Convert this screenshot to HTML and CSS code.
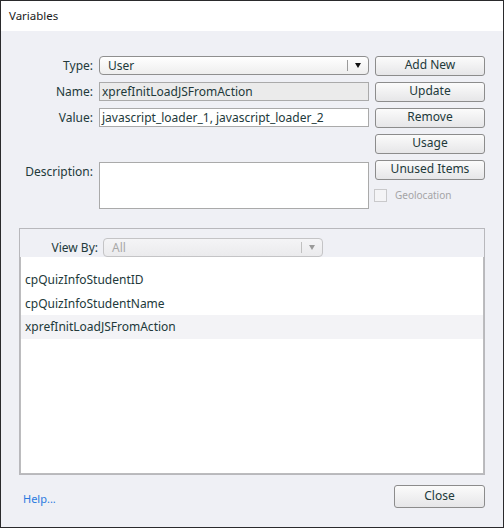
FILE: index.html
```html
<!DOCTYPE html>
<html>
<head>
<meta charset="utf-8">
<link rel="stylesheet" href="styles.css">
</head>
<body>
<div class="window">
  <div class="titlebar">Variables</div>
  <div class="content">
    <div class="top">
      <div class="form">
        <label class="lbl">Type:</label>
        <div class="select">
          <span class="sel-text">User</span>
          <span class="sel-sep"></span>
          <span class="sel-arrow"></span>
        </div>
        <label class="lbl">Name:</label>
        <div class="field readonly">xprefInitLoadJSFromAction</div>
        <label class="lbl">Value:</label>
        <div class="field">javascript_loader_1, javascript_loader_2</div>
        <label class="lbl lbl-desc">Description:</label>
        <div class="field desc"></div>
      </div>
      <div class="buttons">
        <button class="btn">Add New</button>
        <button class="btn">Update</button>
        <button class="btn">Remove</button>
        <button class="btn">Usage</button>
        <button class="btn">Unused Items</button>
        <div class="check">
          <span class="box"></span>
          <span class="check-label">Geolocation</span>
        </div>
      </div>
    </div>
    <div class="panel">
      <div class="panel-head">
        <label class="lbl viewby">View By:</label>
        <div class="select disabled">
          <span class="sel-text">All</span>
          <span class="sel-sep"></span>
          <span class="sel-arrow"></span>
        </div>
      </div>
      <div class="list">
        <div class="row">cpQuizInfoStudentID</div>
        <div class="row">cpQuizInfoStudentName</div>
        <div class="row selected">xprefInitLoadJSFromAction</div>
      </div>
    </div>
    <div class="footer">
      <a class="help">Help...</a>
      <button class="btn close">Close</button>
    </div>
  </div>
</div>
</body>
</html>
```
FILE: styles.css
```css
* { box-sizing: border-box; }
html, body { margin: 0; padding: 0; }
body {
  width: 504px;
  height: 528px;
  font-family: "Noto Sans", "Open Sans", sans-serif;
  font-size: 12px;
  color: #22393a;
}
.window {
  width: 504px;
  height: 528px;
  border: 1px solid #2a2a2c;
  background: #eff0f5;
  display: flex;
  flex-direction: column;
}
.titlebar {
  height: 30px;
  background: #ffffff;
  color: #1a1a1a;
  padding-left: 8px;
  line-height: 30px;
  font-size: 11.5px;
}
.content {
  flex: 1;
  display: flex;
  flex-direction: column;
  padding: 25px 18px 0 0;
}
.top {
  display: flex;
  gap: 6px;
}
.form {
  display: grid;
  grid-template-columns: 92px 270px;
  grid-template-rows: 19px 19px 19px 75px;
  column-gap: 6px;
  row-gap: 7px;
}
.lbl {
  text-align: right;
  line-height: 19px;
  white-space: nowrap;
}
.lbl.lbl-desc { margin-top: 28px; line-height: 20px; }
.field.desc { margin-top: 28px; height: 47px; }
.select {
  position: relative;
  height: 19px;
  border: 1px solid #8f8f8f;
  border-radius: 4px;
  background: linear-gradient(#ffffff, #eeeeee);
  line-height: 17px;
  padding-left: 8px;
}
.sel-sep {
  position: absolute;
  right: 20px;
  top: 3px;
  height: 11px;
  border-left: 1px solid #9a9a9a;
}
.sel-arrow {
  position: absolute;
  right: 7px;
  top: 6px;
  border-left: 3.5px solid transparent;
  border-right: 3.5px solid transparent;
  border-top: 5px solid #111;
}
.select.disabled {
  border-color: #c4c4c6;
  background: linear-gradient(#f4f4f6, #ebebed);
  color: #a8a8a8;
}
.select.disabled .sel-sep { border-left-color: #c0c0c0; }
.select.disabled .sel-arrow { border-top-color: #9a9a9a; }
.field {
  height: 19px;
  border: 1px solid #aaaaaa;
  background: #ffffff;
  padding-left: 2px;
  line-height: 17px;
  white-space: nowrap;
  overflow: hidden;
}
.field.readonly { background: #ebebeb; }
.buttons {
  width: 110px;
  display: flex;
  flex-direction: column;
  gap: 6px;
}
.btn {
  height: 20px;
  border: 1px solid #8c8c8c;
  border-radius: 3px;
  background: linear-gradient(#fbfbfb, #e6e6e8);
  font-family: "Noto Sans", "Open Sans", sans-serif;
  font-size: 12px;
  color: #22393a;
  padding: 0 0 2px 0;
  line-height: 16px;
}
.check {
  display: flex;
  align-items: center;
  gap: 8px;
  margin-top: 2px;
  margin-left: -1px;
}
.box {
  width: 13px;
  height: 13px;
  border: 1px solid #c9c9cb;
  background: #f4f4f6;
}
.check-label {
  color: #a4a4a6;
  font-size: 10px;
}
.panel {
  margin: 19px 0 0 18px;
  height: 247px;
  border: 1px solid #b8b8bc;
  display: flex;
  flex-direction: column;
}
.panel-head {
  height: 28px;
  display: flex;
  align-items: flex-end;
  gap: 5px;
}
.viewby { width: 78px; }
.panel-head .select { width: 220px; }
.list {
  flex: 1;
  background: #ffffff;
  border: 1px solid #bcbcbe;
  border-top: none;
  padding-top: 11px;
}
.row {
  height: 23.5px;
  line-height: 23.5px;
  padding-left: 4px;
}
.row.selected { background: #f3f3f6; }
.footer {
  display: flex;
  justify-content: space-between;
  align-items: center;
  padding: 10px 0 0 22px;
}
.help {
  color: #2b7ae0;
  font-size: 11px;
  margin-top: 4px;
}
.close {
  width: 91px;
  height: 23px;
}
```
